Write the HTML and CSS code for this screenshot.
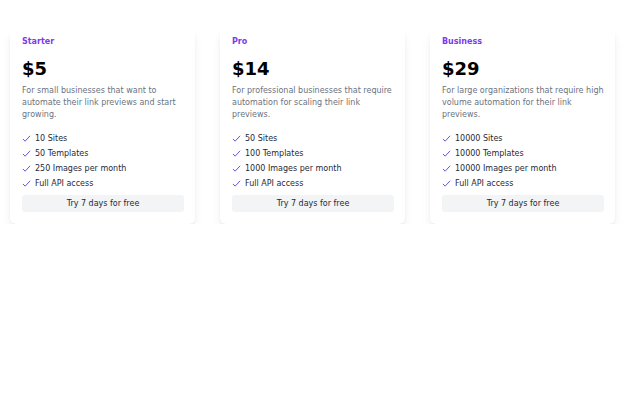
FILE: index.html
```html
<!DOCTYPE html>
<html>
<head>
<meta charset="utf-8">
<link rel="stylesheet" href="styles.css">
</head>
<body>
<div class="plans">
  <div class="card">
    <div class="name">Starter</div>
    <div class="price">$5</div>
    <p class="desc">For small businesses that want to automate their link previews and start growing.</p>
    <ul class="features">
      <li><svg class="check" viewBox="0 0 10 10"><path d="M1 5.5 L3.5 8 L9 2"/></svg>10 Sites</li>
      <li><svg class="check" viewBox="0 0 10 10"><path d="M1 5.5 L3.5 8 L9 2"/></svg>50 Templates</li>
      <li><svg class="check" viewBox="0 0 10 10"><path d="M1 5.5 L3.5 8 L9 2"/></svg>250 Images per month</li>
      <li><svg class="check" viewBox="0 0 10 10"><path d="M1 5.5 L3.5 8 L9 2"/></svg>Full API access</li>
    </ul>
    <div class="btn">Try 7 days for free</div>
  </div>
  <div class="card">
    <div class="name">Pro</div>
    <div class="price">$14</div>
    <p class="desc">For professional businesses that require automation for scaling their link previews.</p>
    <ul class="features">
      <li><svg class="check" viewBox="0 0 10 10"><path d="M1 5.5 L3.5 8 L9 2"/></svg>50 Sites</li>
      <li><svg class="check" viewBox="0 0 10 10"><path d="M1 5.5 L3.5 8 L9 2"/></svg>100 Templates</li>
      <li><svg class="check" viewBox="0 0 10 10"><path d="M1 5.5 L3.5 8 L9 2"/></svg>1000 Images per month</li>
      <li><svg class="check" viewBox="0 0 10 10"><path d="M1 5.5 L3.5 8 L9 2"/></svg>Full API access</li>
    </ul>
    <div class="btn">Try 7 days for free</div>
  </div>
  <div class="card">
    <div class="name">Business</div>
    <div class="price">$29</div>
    <p class="desc">For large organizations that require high volume automation for their link previews.</p>
    <ul class="features">
      <li><svg class="check" viewBox="0 0 10 10"><path d="M1 5.5 L3.5 8 L9 2"/></svg>10000 Sites</li>
      <li><svg class="check" viewBox="0 0 10 10"><path d="M1 5.5 L3.5 8 L9 2"/></svg>10000 Templates</li>
      <li><svg class="check" viewBox="0 0 10 10"><path d="M1 5.5 L3.5 8 L9 2"/></svg>10000 Images per month</li>
      <li><svg class="check" viewBox="0 0 10 10"><path d="M1 5.5 L3.5 8 L9 2"/></svg>Full API access</li>
    </ul>
    <div class="btn">Try 7 days for free</div>
  </div>
</div>
</body>
</html>
```
FILE: styles.css
```css
html, body {
  margin: 0;
  padding: 0;
  background: #ffffff;
  font-family: "DejaVu Sans", sans-serif;
}
.plans {
  display: flex;
  gap: 25px;
  padding: 26px 10px 0 10px;
}
.card {
  width: 185px;
  box-sizing: border-box;
  padding: 11px 11px 12px 12px;
  background: #fff;
  border-radius: 6px;
  box-shadow: 0 8px 12px -3px rgba(0,0,0,0.10), 0 3px 5px -2px rgba(0,0,0,0.06), 0 0 3px rgba(0,0,0,0.02);
}
.name {
  color: #7c3aed;
  font-weight: bold;
  font-size: 8px;
  line-height: 10px;
}
.price {
  margin-top: 11px;
  font-weight: bold;
  font-size: 18px;
  line-height: 22px;
  color: #000;
}
.desc {
  margin: 5px -4px 0 0;
  font-size: 8px;
  line-height: 12px;
  color: #6b7280;
}
.features {
  list-style: none;
  margin: 10px 0 0 0;
  padding: 0;
}
.features li {
  display: flex;
  align-items: center;
  font-size: 8px;
  line-height: 15px;
  color: #1f2937;
}
.check {
  width: 9px;
  height: 9px;
  margin-right: 4px;
  fill: none;
  stroke: #6d4fd8;
  stroke-width: 1.1;
}
.btn {
  margin-top: 4px;
  background: #f3f4f6;
  border-radius: 3px;
  text-align: center;
  font-size: 8px;
  line-height: 17px;
  color: #1f2937;
}
```
